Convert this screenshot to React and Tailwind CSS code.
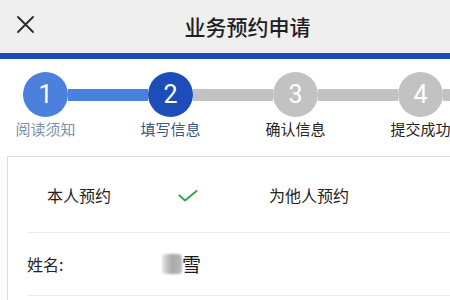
import React from "react";

const steps = [
  { n: "1", label: "阅读须知", circle: "bg-[#4b80dc]", left: "bg-transparent", right: "bg-[#4b80dc]", text: "text-[#7b8fa9]" },
  { n: "2", label: "填写信息", circle: "bg-[#1c4db8]", left: "bg-[#4b80dc]", right: "bg-[#c2c2c2]", text: "text-[#3b5a82]" },
  { n: "3", label: "确认信息", circle: "bg-[#c2c2c2]", left: "bg-[#c2c2c2]", right: "bg-[#c2c2c2]", text: "text-[#222222]" },
  { n: "4", label: "提交成功", circle: "bg-[#c2c2c2]", left: "bg-[#c2c2c2]", right: "bg-[#c2c2c2]", text: "text-[#222222]" },
];

export default function App() {
  return (
    <div
      className="w-[450px] h-[300px] overflow-hidden bg-[#fdfdfd]"
      style={{ fontFamily: '"Noto Sans CJK SC", "Noto Sans", sans-serif' }}
    >
      <div className="relative h-[53px] bg-[#efefef] flex items-center justify-center">
        <svg className="absolute left-[17px] top-[16px]" width="17" height="17" viewBox="0 0 17 17">
          <path d="M1 1 L16 16 M16 1 L1 16" stroke="#2a2a2a" strokeWidth="1.8" strokeLinecap="round" />
        </svg>
        <div className="text-[21px] leading-[24px] font-medium text-[#1e1e1e] mt-[-1px] ml-[45px]">业务预约申请</div>
      </div>
      <div className="h-[6px] bg-[#1b4fb6]" />
      <div className="flex ml-[-17px] pt-[13px] h-[97px] bg-white">
        {steps.map((s) => (
          <div key={s.n} className="w-[125px] shrink-0 flex flex-col items-center">
            <div className="w-full flex items-center">
              <div className={`flex-1 h-[12px] ${s.left}`} />
              <div
                className={`w-[45px] h-[45px] rounded-full ${s.circle} flex items-center justify-center text-white text-[25px] leading-none`}
                style={{ fontFamily: "Roboto, sans-serif" }}
              >
                {s.n}
              </div>
              <div className={`flex-1 h-[12px] ${s.right}`} />
            </div>
            <div className={`mt-[4px] text-[15px] leading-[16px] whitespace-nowrap ${s.text}`}>{s.label}</div>
          </div>
        ))}
      </div>
      <div className="ml-[7px] w-[460px] border border-[#dcdcdc] bg-white h-[200px]">
        <div className="h-[75px] flex items-center text-[16px] text-[#222222]">
          <div className="w-[170px] pl-[39px]">本人预约</div>
          <svg width="20" height="12" viewBox="0 0 20 12" className="mt-[2px]">
            <path d="M1.5 5.5 L7 10.5 L18.5 1" fill="none" stroke="#3aa448" strokeWidth="2" strokeLinecap="round" strokeLinejoin="round" />
          </svg>
          <div className="ml-[71px]">为他人预约</div>
        </div>
        <div className="ml-[19px] border-t border-[#ececec] h-[63px] flex items-center">
          <div className="w-[135px] text-[16px] text-[#222222]">姓名:</div>
          <div className="flex items-center">
            <div className="w-[20px] h-[20px] rounded-[4px] bg-gradient-to-r from-[#e6e6e6] via-[#a8a8a8] to-[#b8b8b8] blur-[1px]" />
            <div className="text-[19px] leading-[22px] text-[#1a1a1a]">雪</div>
          </div>
        </div>
        <div className="ml-[19px] border-t border-[#ececec]" />
      </div>
    </div>
  );
}
